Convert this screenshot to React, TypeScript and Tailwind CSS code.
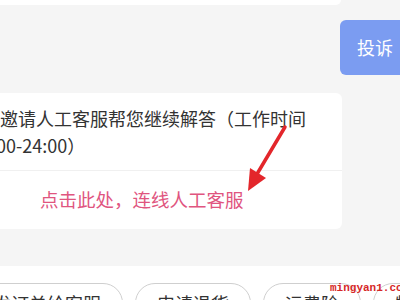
import React from "react";

export default function App() {
  const cjk = { fontFamily: '"Noto Sans CJK SC", "Noto Sans", sans-serif' };
  return (
    <div
      className="relative w-[400px] h-[300px] overflow-hidden bg-[#f5f5f5] flex flex-col"
      style={cjk}
    >
      <div className="h-[5px] w-[341px] bg-white rounded-br-md shrink-0" />
      <div className="mt-[15px] h-[55px] flex shrink-0 pl-[340px]">
        <div className="w-[70px] shrink-0 h-full bg-[#7b9cf1] rounded-md flex items-center justify-center text-white text-[18px]">
          投诉
        </div>
      </div>
      <div className="mt-[18px] w-[342px] h-[136px] bg-white rounded-r-md rounded-l-none flex flex-col shrink-0">
        <div className="h-[77px] flex flex-col justify-center text-[18px] leading-[27px] text-[#333] whitespace-nowrap pt-[1px]">
          <div>邀请人工客服帮您继续解答（工作时间</div>
          <div className="-ml-[4px]">00-24:00）</div>
        </div>
        <div className="h-px bg-[#f0f0f0] shrink-0" />
        <div className="flex-1 flex items-center pl-[40px] text-[18.5px] text-[#e0557f] whitespace-nowrap">
          点击此处，连线人工客服
        </div>
      </div>
      <div className="mt-[37px] flex-1 bg-white pt-[17px] flex gap-[12px] whitespace-nowrap">
        <div className="-ml-[29px] shrink-0 h-[40px] px-[21px] border border-[#cfcfcf] rounded-full flex items-center text-[18px] text-[#333]">
          发订单给客服
        </div>
        <div className="shrink-0 h-[40px] px-[21px] border border-[#cfcfcf] rounded-full flex items-center text-[18px] text-[#333]">
          申请退货
        </div>
        <div className="shrink-0 h-[40px] px-[21px] border border-[#cfcfcf] rounded-full flex items-center text-[18px] text-[#333]">
          运费险
        </div>
        <div className="shrink-0 h-[40px] px-[21px] border border-[#cfcfcf] rounded-full flex items-center text-[18px] text-[#333]">
          物流
        </div>
      </div>
      <svg
        className="absolute left-0 top-0 pointer-events-none"
        width="400"
        height="300"
        viewBox="0 0 400 300"
      >
        <line x1="285" y1="127" x2="257" y2="174" stroke="#e3262b" strokeWidth="3.5" strokeLinecap="round" />
        <polygon points="248,191 250,168 266,178" fill="#e3262b" />
      </svg>
      <div
        className="absolute left-[330px] top-[283px] text-[11px] font-bold text-[#d62828] leading-none"
        style={{ fontFamily: '"Liberation Mono", monospace' }}
      >
        mingyan1.com
      </div>
    </div>
  );
}
